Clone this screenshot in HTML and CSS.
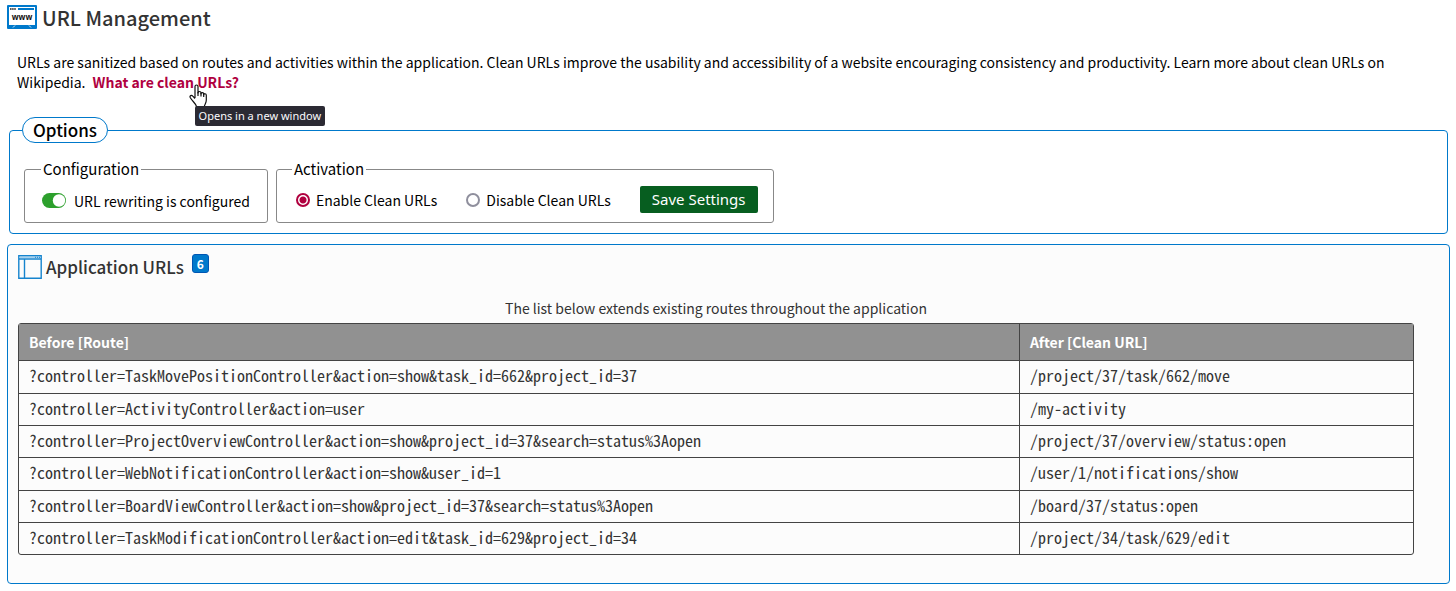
FILE: index.html
```html
<!DOCTYPE html>
<html lang="en">
<head>
<meta charset="utf-8">
<title>URL Management</title>
<link rel="stylesheet" href="styles.css">
</head>
<body>
<main class="page">
  <header class="page-header">
    <svg class="www-icon" width="30" height="24" viewBox="0 0 30 24" aria-hidden="true">
      <rect width="30" height="24" rx="1" fill="#0079cb"/>
      <rect x="2" y="2" width="26" height="18" fill="#fff"/>
      <path d="M3 4h6" stroke="#222" stroke-width="1.300" stroke-dasharray="1.600 .5"/>
      <path d="M11 4h16" stroke="#0079cb" stroke-width="2"/>
      <text class="www-text" x="15" y="15" text-anchor="middle">www</text>
      <path d="M6 22.500l2-2M24 22.500l-2-2" stroke="#d5ebf8"/>
    </svg>
    <h1 class="page-title">URL Management</h1>
  </header>

  <p class="intro">URLs are sanitized based on routes and activities within the application. Clean URLs improve the usability and accessibility of a website encouraging consistency and productivity. Learn more about clean URLs on Wikipedia. <span class="link-wrap"><a class="wiki-link" href="#clean-urls">What are clean URLs?</a><svg class="pointer" width="19" height="24" viewBox="0 0 19 24" aria-hidden="true"><path d="M6 14V2.500C6 .5 9 .5 9 2.500V9c0-2 3-2 3 0v.8c0-1.800 2.700-1.600 2.700.2v.8c0-1.600 2.600-1.400 2.600.4V16c0 3-1.500 4-2 6.500H7.500C6.500 19 3 17 1.200 13.500c-.8-1.800 1.300-2.800 2.600-1.300L6 14.500" fill="#fff" stroke="#111" stroke-width="1.200" stroke-linejoin="round"/><path d="M9 8v4M12 9v3.500M14.700 10v3" stroke="#111" stroke-width="1.200"/></svg><span class="tooltip" role="tooltip">Opens in a new window</span></span></p>

  <form class="settings">
    <fieldset class="options">
      <legend class="options-title">Options</legend>
      <div class="option-groups">
        <fieldset class="group configuration">
          <legend class="group-title">Configuration</legend>
          <svg class="toggle" width="24" height="15" viewBox="0 0 24 15" aria-hidden="true"><rect width="24" height="15" rx="7.500" fill="#2da02d"/><circle cx="17" cy="7.500" r="6.200" fill="#fff"/></svg>
          <span>URL rewriting is configured</span>
        </fieldset>
        <fieldset class="group activation">
          <legend class="group-title">Activation</legend>
          <label class="choice"><input class="radio" type="radio" name="clean" checked>Enable Clean URLs</label>
          <label class="choice"><input class="radio" type="radio" name="clean">Disable Clean URLs</label>
          <button class="save" type="button">Save Settings</button>
        </fieldset>
      </div>
    </fieldset>
  </form>

  <section class="urls">
    <header class="urls-header">
      <svg class="window-icon" width="24" height="24" viewBox="0 0 24 24" aria-hidden="true">
        <path d="M.8.800h22.400v22.400H.8zM1 4h22M6.500 4v19" fill="none" stroke="#1684ce" stroke-width="1.400"/>
        <path d="M1 2.300h22" stroke="#8fc6ea"/><path d="M17 2.300h5" stroke="#1684ce" stroke-dasharray="1 1"/>
      </svg>
      <h2 class="urls-title">Application URLs</h2>
      <span class="count">6</span>
    </header>
    <table class="routes">
      <caption class="routes-caption">The list below extends existing routes throughout the application</caption>
      <thead><tr><th class="before" scope="col">Before [Route]</th><th scope="col">After [Clean URL]</th></tr></thead>
      <tbody>
        <tr><td>?controller=TaskMovePositionController&amp;action=show&amp;task_id=662&amp;project_id=37</td><td>/project/37/task/662/move</td></tr>
        <tr><td>?controller=ActivityController&amp;action=user</td><td>/my-activity</td></tr>
        <tr><td>?controller=ProjectOverviewController&amp;action=show&amp;project_id=37&amp;search=status%3Aopen</td><td>/project/37/overview/status:open</td></tr>
        <tr><td>?controller=WebNotificationController&amp;action=show&amp;user_id=1</td><td>/user/1/notifications/show</td></tr>
        <tr><td>?controller=BoardViewController&amp;action=show&amp;project_id=37&amp;search=status%3Aopen</td><td>/board/37/status:open</td></tr>
        <tr><td>?controller=TaskModificationController&amp;action=edit&amp;task_id=629&amp;project_id=34</td><td>/project/34/task/629/edit</td></tr>
      </tbody>
    </table>
  </section>
</main>
</body>
</html>
```
FILE: styles.css
```css
* { box-sizing: border-box; }
body {
  margin: 0;
  background: #fff;
  color: #000;
  font: 14px/20px "Noto Sans CJK SC", "Open Sans", sans-serif;
}
.page { padding: 5px 6px 7px 7px; }
.page-header { display: flex; align-items: flex-start; gap: 5px; }
.page-title, .urls-title { margin: 0; color: #333; font-weight: 500; }
.page-title { font-size: 20px; line-height: 26px; }
.www-text { font: 700 8px "Open Sans", sans-serif; fill: #111; }
.intro { margin: 21px 48px 0 10px; }
.link-wrap { position: relative; margin-left: 4px; white-space: nowrap; }
.wiki-link { color: #b0003f; font-weight: 700; text-decoration: none; }
.pointer { position: absolute; left: 96px; top: 12px; }
.tooltip {
  position: absolute;
  left: 102px;
  top: 34px;
  padding: 0 4px;
  border-radius: 2px;
  background: #2b2a33;
  color: #fbfbfe;
  font: 11px/20px "Noto Sans", sans-serif;
}
.settings { margin: 25px 2px 0 2px; }
.options { margin: 0; padding: 26px 14px 10px; border: 1px solid #0079cb; border-radius: 4px; min-width: 0; }
.options-title {
  margin-left: -2px;
  padding: 0 10px;
  border: 1px solid #0079cb;
  border-radius: 13px;
  font-size: 17px;
  line-height: 24px;
  font-weight: 500;
}
.option-groups { display: flex; align-items: stretch; gap: 8px; margin-top: -10px; }
.group { display: flex; align-items: center; margin: 0; padding: 0 16px; border: 1px solid #888; border-radius: 3px; min-width: 0; height: 64px; }
.group-title { padding: 0 2px; font-size: 15px; line-height: 20px; }
.configuration { gap: 8px; padding-right: 17px; }
.toggle { margin-left: 1px; }
.activation { gap: 29px; padding: 0 15px 2px; }
.choice { display: flex; align-items: center; gap: 6px; }
.choice:first-of-type { margin-left: 4px; }
.radio { appearance: none; width: 14px; height: 14px; margin: 0; border: 2px solid #8f8f9d; border-radius: 50%; background: #fff; }
.radio:checked { border-color: #b0003f; background: radial-gradient(circle, #b0003f 3px, #fff 4px); }
.save { padding: 0 12px; border: 0; border-radius: 2px; background: #075e20; color: #fff; font: 15px/27px "Noto Sans", sans-serif; }
.urls { margin-top: 10px; padding: 9px 35px 28px 10px; border: 1px solid #0079cb; border-radius: 4px; background: #fcfcfc; }
.urls-header { display: flex; align-items: flex-start; }
.window-icon { margin: 1px 4px 0 0; }
.urls-title { font-size: 17px; line-height: 26px; }
.count { margin-left: 8px; padding: 0 4px; border: 1px solid #0056b3; border-radius: 3px; background: #0079cb; color: #fff; font-size: 12px; line-height: 17px; font-weight: 700; }
.routes { width: 100%; border: 1px solid #444; border-radius: 3px; border-spacing: 0; overflow: hidden; }
.routes-caption { padding: 18px 0 5px; color: #333; }
.routes th { height: 37px; padding: 0 10px; background: #919191; color: #fff; text-align: left; font-weight: 700; border-bottom: 1px solid #444; }
.routes td { height: 32px; padding: 0 10px 4px; border-bottom: 1px solid #444; color: #333; font: 16px/20px "Noto Sans Mono CJK SC", "DejaVu Sans Mono", monospace; }
.routes tr > :first-child { border-right: 1px solid #444; }
.routes tbody tr:nth-child(3n+1) td { height: 33px; }
.routes tbody tr:last-child td { height: 31px; border-bottom: 0; }
.before { width: 71.8%; }
```
